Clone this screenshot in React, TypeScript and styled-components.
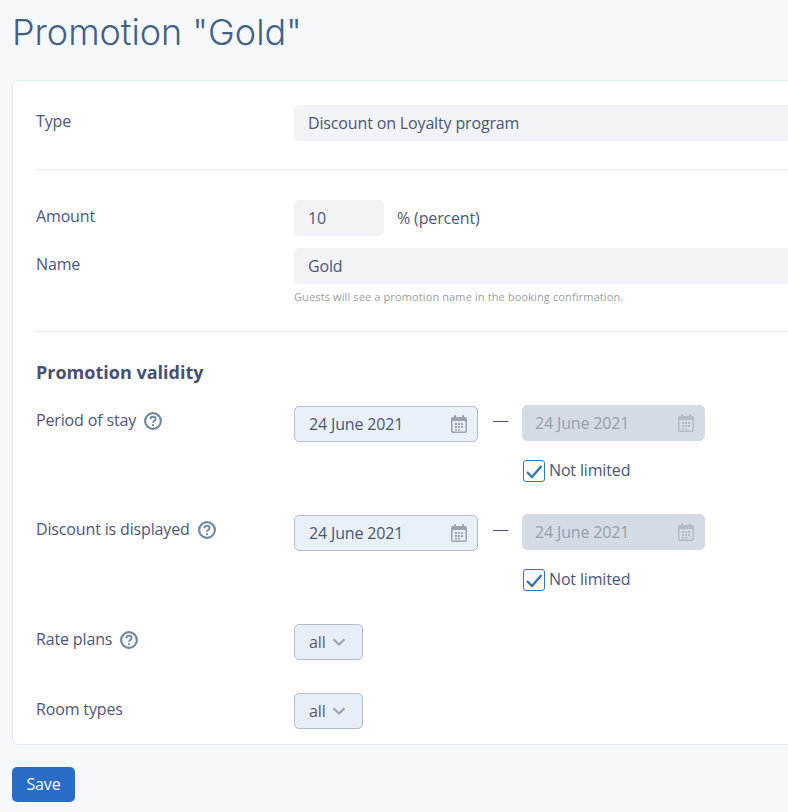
import React from 'react';
import styled, { createGlobalStyle } from 'styled-components';

const GlobalStyle = createGlobalStyle`
    html, body {
        margin: 0;
        padding: 0;
        height: 812px;
        overflow: hidden;
        background-color: #f6f9fc;
    }
`;

const Page = styled.div`
    width: 1100px;
    padding: 0 12px;
    font-family: "Open Sans", "Noto Sans", sans-serif;
    font-size: 16px;
    letter-spacing: -0.15px;
    color: #4d5675;
`;

const Title = styled.h1`
    margin: 0;
    padding: 10px 0 0;
    height: 80px;
    box-sizing: border-box;
    font-family: Inter, Roboto, sans-serif;
    font-size: 36px;
    line-height: 44px;
    font-weight: 350;
    letter-spacing: -0.05px;
    color: #436187;
`;

const Card = styled.div`
    box-sizing: border-box;
    height: 665px;
    background-color: #fff;
    border: 1px solid #deebf1;
    border-radius: 6px;
    padding: 24px 23px 0;
`;

const Row = styled.div<{ $height: number }>`
    display: grid;
    grid-template-columns: 258px 1fr;
    align-items: start;
    height: ${(props) => props.$height}px;
`;

const Label = styled.div<{ $top?: number }>`
    display: flex;
    align-items: center;
    gap: 8px;
    height: 24px;
    margin-top: ${(props) => props.$top ?? 0}px;
    line-height: 24px;
`;

const HelpSlot = styled.span`
    display: flex;
    margin-top: 2px;
`;

const Divider = styled.div<{ $after: number }>`
    height: 1px;
    background-color: #e2ebf0;
    margin-bottom: ${(props) => props.$after}px;
`;

const Field = styled.div<{ $width?: number }>`
    box-sizing: border-box;
    display: flex;
    align-items: center;
    width: ${(props) => (props.$width ? `${props.$width}px` : '100%')};
    height: 36px;
    padding: 0 14px;
    background-color: #f1f3f7;
    border-radius: 5px;
`;

const Inline = styled.div`
    display: flex;
    align-items: center;
    gap: 13px;
`;

const Hint = styled.div`
    margin-top: 6px;
    font-size: 11px;
    line-height: 14px;
    letter-spacing: 0.12px;
    color: #9b9ea6;
`;

const Heading = styled.h2`
    margin: 0;
    height: 46px;
    font-size: 18px;
    line-height: 24px;
    font-weight: 700;
    letter-spacing: 0;
    color: #47506f;
`;

const DateRow = styled.div`
    display: flex;
    align-items: flex-start;
`;

const DateBox = styled.div<{ $disabled?: boolean }>`
    box-sizing: border-box;
    display: flex;
    align-items: center;
    justify-content: space-between;
    width: ${(props) => (props.$disabled ? 183 : 184)}px;
    height: 36px;
    padding: 0 10px 0 ${(props) => (props.$disabled ? 12 : 14)}px;
    border-radius: 5px;
    border: 1px solid ${(props) => (props.$disabled ? '#d5dbe5' : '#b3bdd0')};
    background-color: ${(props) => (props.$disabled ? '#d5dbe5' : '#e8f0f9')};
    color: ${(props) => (props.$disabled ? '#959cae' : '#4d5675')};
    margin-top: ${(props) => (props.$disabled ? -1 : 0)}px;
`;

const Dash = styled.div`
    width: 15px;
    height: 1px;
    margin: 15px 14px 0 15px;
    background-color: #47506f;
`;

const CheckRow = styled.div`
    display: flex;
    align-items: center;
    gap: 4px;
    height: 22px;
    margin: 18px 0 0 229px;
`;

const CheckLabel = styled.span`
    margin-top: -2px;
`;

const CheckBox = styled.div`
    box-sizing: border-box;
    display: flex;
    align-items: center;
    justify-content: center;
    width: 22px;
    height: 22px;
    background-color: #fff;
    border: 1px solid #2f77b8;
    border-radius: 3px;
`;

const Select = styled.div`
    box-sizing: border-box;
    display: flex;
    align-items: center;
    gap: 6px;
    width: 69px;
    height: 36px;
    padding: 0 14px;
    border: 1px solid #b3bdd0;
    border-radius: 5px;
    background-color: #e8eef8;
    color: #555a6b;
`;

const SaveButton = styled.button`
    display: block;
    width: 63px;
    height: 35px;
    margin-top: 22px;
    padding: 0 0 2px;
    border: 0;
    border-radius: 5px;
    background-color: #2a6dc6;
    color: #fff;
    font-family: "Open Sans", "Noto Sans", sans-serif;
    font-size: 16px;
    letter-spacing: -0.15px;
`;

const CalendarIcon = ({ color }: { color: string }) => (
    <svg width="16" height="18" viewBox="0 0 16 18" fill={color}>
        <rect x="3" y="0" width="2" height="4" rx="1" />
        <rect x="11" y="0" width="2" height="4" rx="1" />
        <path
            fillRule="evenodd"
            d="M2 2h12a2 2 0 0 1 2 2v12a2 2 0 0 1-2 2H2a2 2 0 0 1-2-2V4a2 2 0 0 1 2-2zM1.500 6v10c0 .3.2.5.5.5h12c.3 0 .5-.2.5-.5V6zM4 8h2v2H4zM7 8h2v2H7zM10 8h2v2h-2zM4 11h2v2H4zM7 11h2v2H7zM10 11h2v2h-2zM4 14h2v1.500H4zM7 14h2v1.500H7z"
        />
    </svg>
);

const HelpIcon = () => (
    <HelpSlot>
        <svg width="18" height="18" viewBox="0 0 18 18" fill="none">
            <circle cx="9" cy="9" r="7.900" stroke="#6f8aa3" strokeWidth="2.200" />
            <path
                d="M6.400 7.200c0-1.500 1.100-2.400 2.600-2.400s2.600.9 2.600 2.200c0 2-2.600 2-2.600 3.700"
                stroke="#6f8aa3"
                strokeWidth="1.900"
            />
            <circle cx="9" cy="13.200" r="1.100" fill="#6f8aa3" />
        </svg>
    </HelpSlot>
);

const ChevronIcon = () => (
    <svg width="14" height="8" viewBox="0 0 14 8" fill="none">
        <path d="M1.500 1.200L7 6.500l5.500-5.300" stroke="#9aa5b5" strokeWidth="2.200" />
    </svg>
);

const CheckIcon = () => (
    <svg width="18" height="15" viewBox="0 0 18 15" fill="none">
        <path d="M2 8l5 5L16.500 2" stroke="#2f77b8" strokeWidth="2.400" />
    </svg>
);

const DateRange = () => (
    <div>
        <DateRow>
            <DateBox>
                24 June 2021
                <CalendarIcon color="#97a2b3" />
            </DateBox>
            <Dash />
            <DateBox $disabled>
                24 June 2021
                <CalendarIcon color="#b3bbc9" />
            </DateBox>
        </DateRow>
        <CheckRow>
            <CheckBox>
                <CheckIcon />
            </CheckBox>
            <CheckLabel>Not limited</CheckLabel>
        </CheckRow>
    </div>
);

const App = () => (
    <Page>
        <GlobalStyle />
        <Title>Promotion "Gold"</Title>
        <Card>
            <Row $height={64}>
                <Label $top={4}>Type</Label>
                <Field>Discount on Loyalty program</Field>
            </Row>
            <Divider $after={30} />
            <Row $height={48}>
                <Label $top={4}>Amount</Label>
                <Inline>
                    <Field $width={90}>10</Field>
                    % (percent)
                </Inline>
            </Row>
            <Row $height={83}>
                <Label $top={4}>Name</Label>
                <div>
                    <Field>Gold</Field>
                    <Hint>Guests will see a promotion name in the booking confirmation.</Hint>
                </div>
            </Row>
            <Divider $after={28} />
            <Heading>Promotion validity</Heading>
            <Row $height={109}>
                <Label $top={2}>
                    Period of stay
                    <HelpIcon />
                </Label>
                <DateRange />
            </Row>
            <Row $height={109}>
                <Label $top={2}>
                    Discount is displayed
                    <HelpIcon />
                </Label>
                <DateRange />
            </Row>
            <Row $height={69}>
                <Label $top={3}>
                    Rate plans
                    <HelpIcon />
                </Label>
                <Select>
                    all
                    <ChevronIcon />
                </Select>
            </Row>
            <Row $height={50}>
                <Label $top={4}>Room types</Label>
                <Select>
                    all
                    <ChevronIcon />
                </Select>
            </Row>
        </Card>
        <SaveButton>Save</SaveButton>
    </Page>
);

export default App;
